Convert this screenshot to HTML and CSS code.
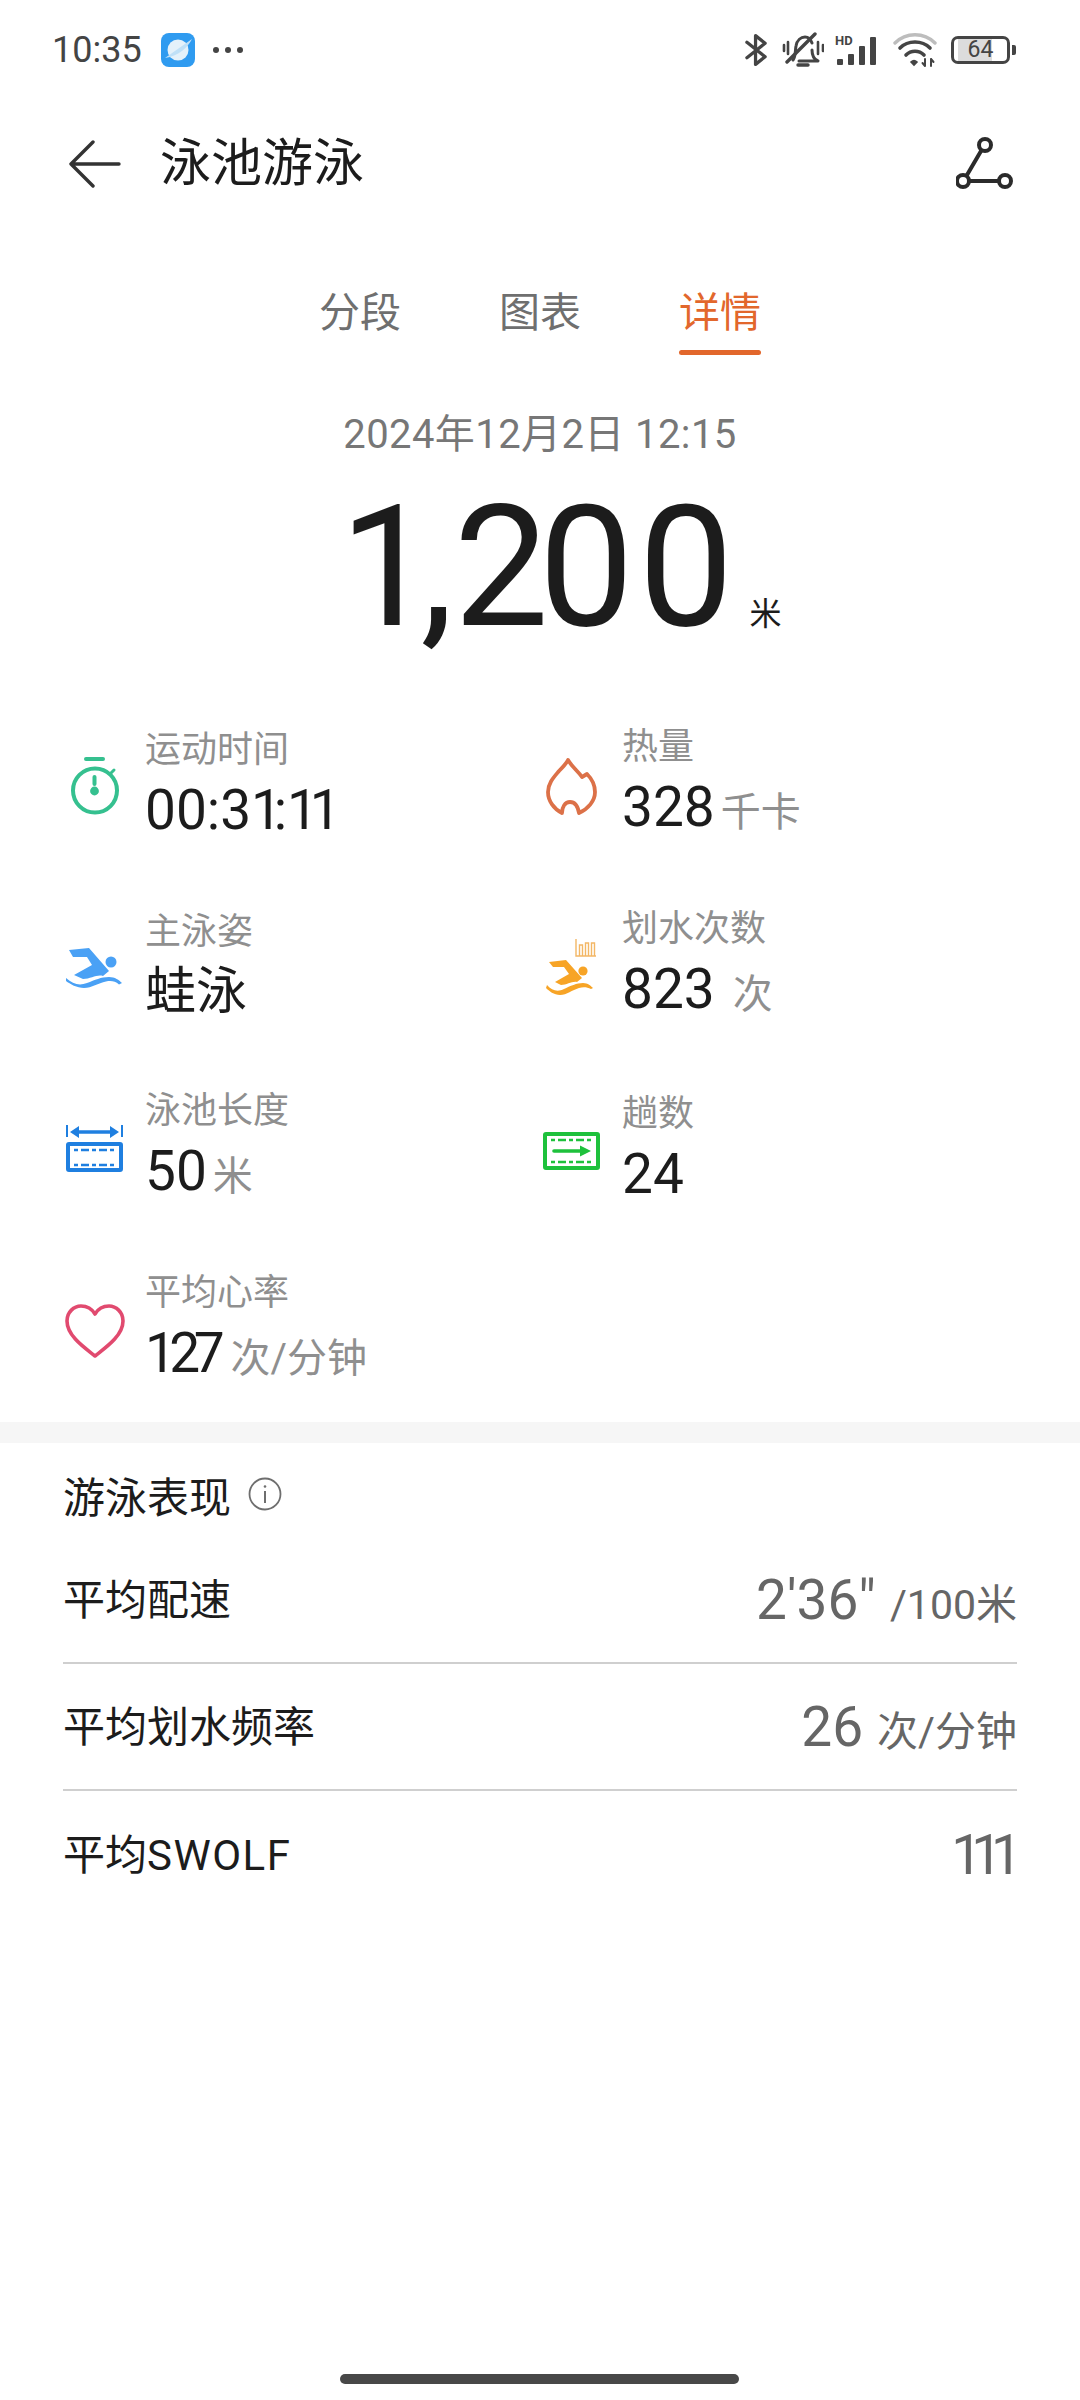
FILE: index.html
```html
<!DOCTYPE html>
<html lang="zh-CN">

<head>
  <meta charset="UTF-8">
  <title>泳池游泳</title>
  <meta name="viewport" content="width=device-width,initial-scale=1">
  <link rel="stylesheet" href="styles.css">
</head>

<body>
  <div class="status">
    <span class="time">10:35</span>
    <svg class="app-logo" viewBox="0 0 34 34">
      <rect width="34" height="34" rx="8" fill="#2f9bf0" />
      <circle cx="17" cy="17" r="10.5" fill="#e4f1fa" />
      <path d="M4 25 L31 6 C27 14 18 23 4 25z" fill="#bfe0f7" />
    </svg>
    <svg class="dots" viewBox="0 0 32 8" fill="#444">
      <circle cx="4" cy="4" r="3" />
      <circle cx="16" cy="4" r="3" />
      <circle cx="28" cy="4" r="3" />
    </svg>
    <div class="status-right">
      <svg class="st-bt" viewBox="0 0 24 36" fill="none" stroke="#444" stroke-width="3.4" stroke-linejoin="round"
        stroke-linecap="round">
        <path d="M2 10 L21 25 L11 33 V3 L21 11 L2 26" />
      </svg>
      <svg class="st-bell" viewBox="0 0 42 36" fill="none" stroke="#444" stroke-linecap="round" stroke-linejoin="round">
        <path stroke-width="3" d="M11 28 C14 24 13 19 14 14 C15 8 19 5 23 5 C27 5 29 8 30 11 M30 18 C30 23 31 27 36 29 H17" />
        <path stroke-width="3.4" d="M5 30 L33 2" />
        <path stroke-width="3.4" d="M16 33 H26" />
        <path stroke-width="2.6" d="M2 13 V19 M6 10 V22 M36 10 V22 M41 13 V19" />
      </svg>
      <div class="st-signal">
        <span class="st-hd">HD</span>
        <i class="b1"></i><i class="b2"></i><i class="b3"></i><i class="b4"></i>
      </div>
      <svg class="st-wifi" viewBox="0 0 44 36" fill="none" stroke-linecap="round">
        <path d="M2 11 C13 0 31 0 42 11" stroke="#bdbdbd" stroke-width="3.4" />
        <path d="M7 16 C15 8 29 8 37 16" stroke="#444" stroke-width="3.6" />
        <path d="M13 23 C18 18 26 18 31 23" stroke="#444" stroke-width="3.6" />
        <path d="M18 30 L21 33 L24 30 C22 28 20 28 18 30z" fill="#444" stroke="#444" stroke-width="1.6" />
        <path d="M32 27 V34 M29.5 31 L32 34 M38 34 V27 M38 27 L40.5 30" stroke="#444" stroke-width="2" />
      </svg>
      <div class="st-batt">
        <div class="batt-body"><span class="batt-num">64</span></div>
        <i class="batt-tip"></i>
      </div>
    </div>
  </div>

  <div class="topbar">
    <svg class="back" viewBox="0 0 52 48" fill="none" stroke="#333" stroke-width="3.4" stroke-linecap="round"
      stroke-linejoin="round">
      <path d="M24 2 L2 24 L24 46 M2 24 H50" />
    </svg>
    <h1>泳池游泳</h1>
    <svg class="route" viewBox="0 0 60 54" fill="none" stroke="#2b2b2b" stroke-width="4">
      <circle cx="29" cy="8" r="6" />
      <circle cx="7" cy="44" r="6" />
      <circle cx="49" cy="44" r="6" />
      <path d="M25.6 13 L10.4 39 M13 44 H43" />
    </svg>
  </div>

  <div class="tabs">
    <span class="tab">分段</span>
    <span class="tab">图表</span>
    <span class="tab active">详情</span>
  </div>

  <div class="date">2024年12月2日 12:15</div>
  <div class="total">
    <span class="total-num"><span class="k1">1</span><span class="kc">,</span><span class="k2">2</span>00</span><span class="total-unit">米</span>
  </div>

  <div class="metrics">
    <div class="metric">
      <svg class="m-icon" viewBox="0 0 60 60" fill="none" stroke="#35c08f" stroke-width="4" stroke-linecap="round">
        <path d="M21 4 H38" />
        <circle cx="30" cy="35.5" r="22" />
        <path d="M29.5 22 V29" />
        <circle cx="29.5" cy="36" r="2.4" fill="#35c08f" />
        <path d="M46 18 L49 15" stroke-width="3" />
      </svg>
      <div>
        <div class="m-label">运动时间</div>
        <div class="m-value">00:3<span class="n1">1</span>:<span class="n1">11</span></div>
      </div>
    </div>
    <div class="metric">
      <svg class="m-icon" viewBox="0 0 60 60" fill="none" stroke="#dc7148" stroke-width="3.8" stroke-linejoin="round"
        stroke-linecap="round">
        <path d="M26 5 C30 12 36 16 40 22 L45 19 C50 24 53 30 53 37 C53 46 46 54 37 58 C36 52 33 47 28 47 C23 47 20 52 20 58 C12 54 6 46 6 37 C6 28 12 22 17 16 C20 13 24 9 26 5z" />
      </svg>
      <div>
        <div class="m-label">热量</div>
        <div class="m-value">328<span class="m-unit">千卡</span></div>
      </div>
    </div>
    <div class="metric">
      <svg class="m-icon" viewBox="0 0 60 60" fill="#4aa1f5">
        <path d="M4 13 L24 11 L44 34 L38 39 C32 37 26 42 18 42 L9 38 L27 28 L22 20 L8 20z" />
        <circle cx="46" cy="25" r="5.5" />
        <path d="M1 41 C8 47 14 49 22 46 C30 43 36 40 44 40 C50 40 54 43 57 46 L54 47.5 C50 44 46 43.5 41 44.5 C33 46 27 51 19 51 C12 51 5 47 1 44z" />
      </svg>
      <div>
        <div class="m-label">主泳姿</div>
        <div class="m-value m-cn">蛙泳</div>
      </div>
    </div>
    <div class="metric">
      <svg class="m-icon" viewBox="0 0 60 60" fill="#f7a426">
        <g transform="translate(2 4)">
          <path d="M5 21 L22 19 L38 37 L33 41 C28 40 23 44 17 44 L11 41 L25 33 L20 26 L9 26z" />
          <circle cx="39" cy="30" r="4.6" />
          <path d="M3 44 C8 50 14 51 20 48 C26 45 33 42 39 42 C44 42 47 45 49 47 L47 48 C43 46 39 46 35 47 C28 49 23 54 16 54 C10 54 5 50 2 47z" />
        </g>
        <path d="M34 2 V19 H54 M37.5 19 V8 H40.5 V19 M43.5 19 V6 H46.5 V19 M49.5 19 V6 H52.5 V19" fill="none" stroke="#f3b765" stroke-width="1.4" />
      </svg>
      <div>
        <div class="m-label">划水次数</div>
        <div class="m-value">823<span class="m-unit wide">次</span></div>
      </div>
    </div>
    <div class="metric">
      <svg class="m-icon" viewBox="0 0 60 60" fill="none" stroke="#1f7fe0">
        <path d="M2 6 V18 M57 6 V18" stroke-width="2" />
        <path d="M10 13 H49" stroke-width="3.4" />
        <path d="M5 13 L14 7 V19z M54 13 L45 7 V19z" fill="#1f7fe0" stroke="none" />
        <rect x="3" y="25" width="53" height="26" rx="1" stroke-width="4" />
        <path d="M9 31 H51 M9 46 H51" stroke-width="2.6" stroke-dasharray="4 3 8 3" />
      </svg>
      <div>
        <div class="m-label">泳池长度</div>
        <div class="m-value">50<span class="m-unit">米</span></div>
      </div>
    </div>
    <div class="metric">
      <svg class="m-icon" viewBox="0 0 60 60" fill="none" stroke="#1ec13c">
        <rect x="3" y="15" width="53" height="34" rx="1" stroke-width="4" />
        <path d="M9 21 H51 M9 43 H51" stroke-width="2.6" stroke-dasharray="4 3 8 3" />
        <path d="M12 32 H39" stroke-width="3.6" stroke-linecap="round" />
        <path d="M38 26.5 L49 32 L38 37.5z" fill="#1ec13c" stroke="none" />
      </svg>
      <div>
        <div class="m-label">趟数</div>
        <div class="m-value">24</div>
      </div>
    </div>
    <div class="metric">
      <svg class="m-icon" viewBox="0 0 60 60" fill="none" stroke="#e14a6f" stroke-width="3.6" stroke-linejoin="round">
        <path d="M30 55 C20 47 2 35 2 20 C2 11 9 5 16 5 C22 5 27 8 30 13 C33 8 38 5 44 5 C51 5 58 11 58 20 C58 35 40 47 30 55z" />
      </svg>
      <div>
        <div class="m-label">平均心率</div>
        <div class="m-value"><span class="n2">12</span>7<span class="m-unit">次/分钟</span></div>
      </div>
    </div>
  </div>

  <div class="band"></div>

  <div class="perf">
    <div class="perf-title">游泳表现
      <svg class="info" viewBox="0 0 34 34" fill="none" stroke="#6e6e6e">
        <circle cx="17" cy="17" r="15.5" stroke-width="1.8" />
        <path d="M17 14 V26" stroke-width="2" />
        <circle cx="17" cy="9.5" r="1.3" fill="#6e6e6e" stroke="none" />
      </svg>
    </div>
    <div class="perf-row"><span class="perf-name">平均配速</span><span class="perf-val">2'36"<small>/100米</small></span></div>
    <div class="perf-row"><span class="perf-name">平均划水频率</span><span class="perf-val">26<small>次/分钟</small></span></div>
    <div class="perf-row"><span class="perf-name">平均<span class="latin">SWOLF</span></span><span class="perf-val"><span class="n1 last">111</span></span></div>
  </div>

  <div class="home-bar"></div>
</body>

</html>
```

FILE: styles.css
```css
* {
  box-sizing: border-box;
  margin: 0;
  padding: 0;
}

:root {
  --text: #1c1c1c;
  --muted: #8f8f8f;
  --grey: #666;
  --orange: #e2672c;
  --line: #cfcfcf;
}

html, body {
  height: 2400px;
}

body {
  position: relative;
  width: 1080px;
  overflow: hidden;
  background: #fff;
  color: var(--text);
  font-family: Roboto, "Noto Sans CJK SC", sans-serif;
}

.status {
  display: flex;
  align-items: center;
  height: 50px;
  margin-top: 25px;
  padding: 0 64px 0 52px;
}

.time {
  font-size: 36px;
  color: #444;
  width: 109px;
}

.app-logo {
  width: 34px;
  height: 34px;
}

.dots {
  width: 32px;
  height: 8px;
  margin-left: 17px;
}

.status-right {
  margin-left: auto;
  display: flex;
  align-items: center;
}

.st-bt {
  width: 23px;
  height: 36px;
  margin-right: 14px;
}

.st-bell {
  width: 42px;
  height: 36px;
  margin-right: 11px;
}

.st-signal {
  position: relative;
  display: flex;
  align-items: flex-end;
  gap: 5px;
  width: 46px;
  height: 30px;
  margin-right: 12px;
  padding-left: 2px;
}

.st-signal i {
  display: block;
  width: 6px;
  background: #444;
  border-radius: 1px;
}

.b1 { height: 6px; }
.b2 { height: 11px; }
.b3 { height: 19px; }
.b4 { height: 28px; }

.st-hd {
  position: absolute;
  left: 0;
  top: -1px;
  font-size: 13px;
  line-height: 13px;
  font-weight: 700;
  color: #444;
}

.st-wifi {
  width: 44px;
  height: 36px;
  margin-right: 14px;
}

.st-batt {
  display: flex;
  align-items: center;
  gap: 2px;
}

.batt-body {
  width: 59px;
  height: 28px;
  border: 3px solid #444;
  border-radius: 7px;
  background: linear-gradient(90deg, #fff 0, #fff 4px, #dcdcdc 4px, #dcdcdc 38px, #fff 38px);
  text-align: center;
}

.batt-num {
  display: block;
  font-size: 23px;
  line-height: 22px;
  color: #444;
}

.batt-tip {
  display: block;
  width: 4px;
  height: 10px;
  background: #444;
  border-radius: 0 2px 2px 0;
}

.topbar {
  display: flex;
  align-items: center;
  height: 60px;
  margin-top: 59px;
  padding: 0 64px 0 69px;
}

.back {
  width: 52px;
  height: 48px;
}

h1 {
  font-size: 51px;
  font-weight: 400;
  margin-left: 39px;
  line-height: 60px;
}

.route {
  width: 60px;
  height: 54px;
  margin-left: auto;
}

.tabs {
  display: flex;
  justify-content: center;
  gap: 98px;
  margin-top: 89px;
}

.tab {
  position: relative;
  font-size: 41px;
  line-height: 60px;
  height: 72px;
  color: #6f6f6f;
}

.tab.active {
  color: var(--orange);
}

.tab.active::after {
  content: "";
  position: absolute;
  left: 0;
  right: 0;
  bottom: 0;
  height: 5px;
  border-radius: 3px;
  background: var(--orange);
}

.date {
  margin-top: 50px;
  text-align: center;
  font-size: 40px;
  letter-spacing: .4px;
  line-height: 60px;
  color: #777;
}

.total {
  display: flex;
  justify-content: center;
  align-items: baseline;
  padding-left: 41px;
  height: 180px;
  margin-top: 12px;
}

.total-num {
  font-size: 169px;
  line-height: 180px;
  letter-spacing: 5px;
}

/* the reference font has a narrower 1, pull the neighbours in by hand */
.k1 {
  letter-spacing: -14px;
}

.kc {
  letter-spacing: 0;
}

.k2 {
  letter-spacing: -10px;
}

.total-unit {
  font-size: 32px;
  margin-left: 11px;
}

.metrics {
  display: grid;
  grid-template-columns: 477px 1fr;
  grid-auto-rows: 182px;
  margin-top: 37px;
  padding-left: 65px;
}

.metric {
  display: flex;
  align-items: center;
  gap: 20px;
}

.m-icon {
  width: 60px;
  height: 60px;
  flex: none;
}

.m-label {
  font-size: 36px;
  line-height: 50px;
  color: var(--muted);
}

.m-value {
  font-size: 55px;
  line-height: 70px;
  white-space: nowrap;
}

.m-cn {
  font-size: 51px;
}

.n1 {
  letter-spacing: -.15em;
}

.n2 {
  letter-spacing: -.12em;
}

.n1.last {
  letter-spacing: -.2em;
  margin-right: 6px;
}

.m-unit {
  font-size: 40px;
  color: var(--muted);
  margin-left: 6px;
}

.m-unit.wide {
  margin-left: 18px;
}

.band {
  height: 21px;
  background: #f6f6f6;
}

.perf {
  padding: 0 63px;
}

.perf-title {
  display: flex;
  align-items: center;
  gap: 17px;
  height: 60px;
  margin-top: 21px;
  margin-bottom: 13px;
  font-size: 42px;
}

.info {
  width: 34px;
  height: 34px;
}

.perf-row {
  display: flex;
  justify-content: space-between;
  align-items: center;
  height: 127px;
  font-size: 42px;
  border-bottom: 2px solid var(--line);
}

.perf-row:last-child {
  border-bottom: none;
}

.perf-name {
  margin-bottom: 6px;
}

.latin {
  letter-spacing: 1.5px;
}

.perf-val {
  font-size: 55px;
  color: var(--grey);
}

.perf-val small {
  font-size: 41px;
  margin-left: 14px;
}

.home-bar {
  position: absolute;
  left: 340px;
  top: 2374px;
  width: 399px;
  height: 10px;
  border-radius: 5px;
  background: #484848;
}
```
